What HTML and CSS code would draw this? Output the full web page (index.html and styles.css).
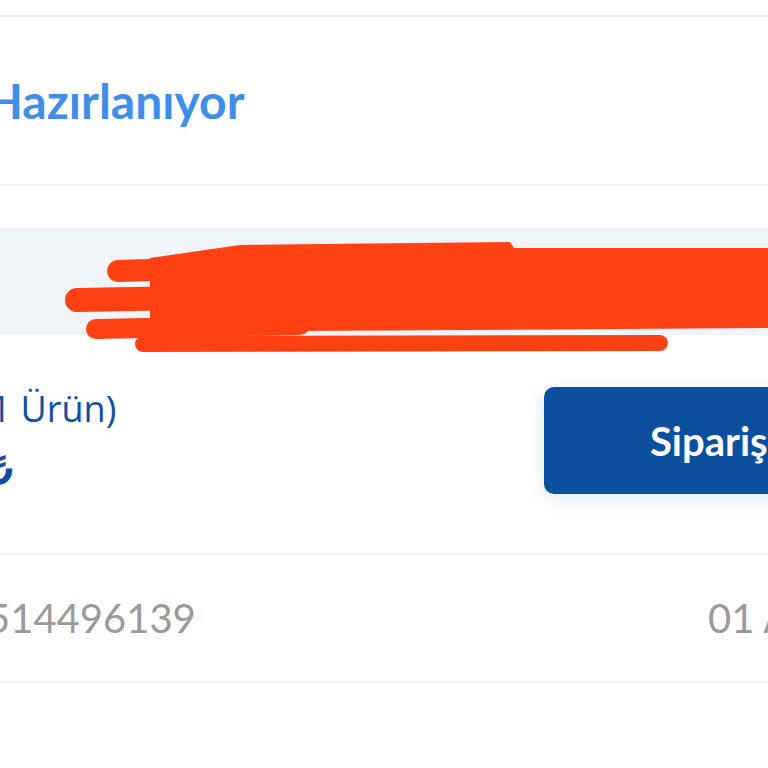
FILE: index.html
```html
<!DOCTYPE html>
<html lang="tr">
<head>
<meta charset="UTF-8">
<meta name="viewport" content="width=device-width, initial-scale=1.0">
<title>Siparişlerim</title>
<link rel="stylesheet" href="styles.css">
</head>
<body>
<div class="screen">
    <div class="top-gap"></div>

    <section class="status-row">
        <span class="status">Hazırlanıyor</span>
    </section>

    <section class="order">
        <div class="address-band">
            <!-- hidden address, scribbled over -->
            <svg class="scribble" width="768" height="130" viewBox="0 0 768 130">
                <polygon points="150,30 240,17 510,14 514,20 768,20 768,100 150,104" fill="#ff4114"/>
                <g stroke="#ff4114" stroke-linecap="round" fill="none">
                    <line x1="118" y1="43" x2="300" y2="37" stroke-width="22"/>
                    <line x1="77" y1="72" x2="300" y2="68" stroke-width="24"/>
                    <line x1="96" y1="101" x2="300" y2="97" stroke-width="20"/>
                    <line x1="143" y1="116" x2="660" y2="115" stroke-width="16"/>
                </g>
            </svg>
        </div>

        <div class="details">
            <div class="summary">
                <div class="count">(1 Ürün)</div>
                <div class="price">₺</div>
            </div>
            <button class="track-btn">Sipariş Detayı</button>
        </div>
    </section>

    <section class="meta-row">
        <span class="order-no">514496139</span>
        <span class="order-date">01 Ağustos 2023</span>
    </section>
</div>
</body>
</html>
```

FILE: styles.css
```css
body {
    margin: 0;
    background: #fff;
    overflow: hidden;
    font-family: Lato, "Open Sans", sans-serif;
}

.screen {
    width: 1200px;
}

.top-gap {
    height: 15px;
}

.status-row {
    border-top: 2px solid #efefef;
    border-bottom: 2px solid #efefef;
    height: 167px;
    display: flex;
    align-items: center;
}

.status {
    margin-left: -14px;
    color: #3f8fe8;
    font-size: 48px;
    font-weight: 700;
    line-height: 1;
}

.order {
    padding-top: 42px;
    border-bottom: 2px solid #efefef;
}

.address-band {
    position: relative;
    height: 107px;
    width: 768px;
    background: #f0f4f9;
}

.scribble {
    position: absolute;
    top: 0;
    left: 0;
    overflow: visible;
}

.details {
    display: grid;
    grid-template-columns: 544px 420px;
    padding: 52px 0 58px;
}

.summary {
    color: #0f4f9e;
}

.count {
    margin-left: -20px;
    margin-top: -2px;
    font-family: "Open Sans", sans-serif;
    font-size: 36px;
    line-height: 48px;
}

.price {
    margin-left: -13px;
    margin-top: 6px;
    font-family: "Noto Sans", sans-serif;
    font-size: 46px;
    font-weight: 700;
    line-height: 56px;
}

.track-btn {
    height: 107px;
    border: none;
    border-radius: 10px;
    background: #0b4f9f;
    color: #fff;
    font-family: Lato, sans-serif;
    font-size: 40px;
    font-weight: 700;
    text-align: left;
    padding: 0 0 0 106px;
    box-shadow: 0 4px 18px rgba(30, 70, 130, 0.14);
}

.meta-row {
    display: grid;
    grid-template-columns: 708px auto;
    align-items: center;
    height: 126px;
    border-bottom: 2px solid #efefef;
    color: #9a9a9a;
    font-size: 40px;
    line-height: 1;
}

.order-no {
    margin-left: -13px;
}
```
